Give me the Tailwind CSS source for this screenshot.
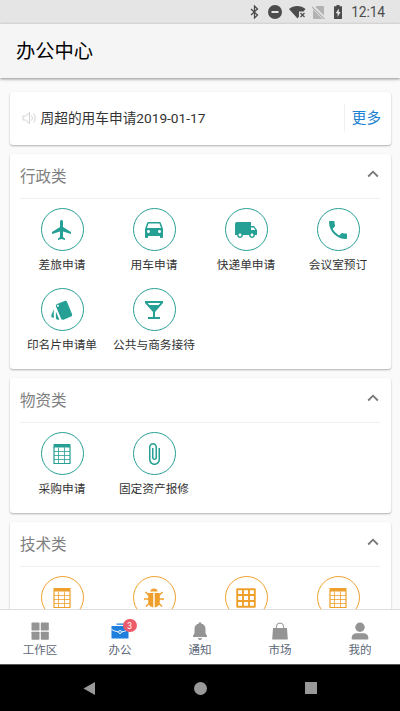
<!DOCTYPE html>
<html lang="zh-CN">
<head>
<meta charset="utf-8">
<meta name="viewport" content="width=device-width, initial-scale=1">
<title>办公中心</title>
<script src="https://cdn.jsdelivr.net/npm/@tailwindcss/browser@4"></script>
</head>
<body class="w-[400px] h-[711px] overflow-hidden bg-[#fafafa] flex flex-col font-['Roboto','Noto_Sans_CJK_SC',sans-serif] text-[#333]">

<svg class="hidden">
  <symbol id="plane" viewBox="0 0 24 24"><path d="M21 16v-2l-8-5V3.500C13 2.670 12.330 2 11.500 2S10 2.670 10 3.500V9l-8 5v2l8-2.500V19l-2 1.500V22l3.500-1 3.500 1v-1.500L13 19v-5.500l8 2.500z"/></symbol>
  <symbol id="car" viewBox="0 0 24 24"><path d="M18.920 5.010C18.720 4.420 18.160 4 17.500 4h-11c-.660 0-1.210.420-1.420 1.010L3 11v8c0 .550.450 1 1 1h1c.550 0 1-.450 1-1v-1h12v1c0 .550.450 1 1 1h1c.550 0 1-.450 1-1v-8l-2.080-5.990zM6.500 15c-.830 0-1.500-.670-1.500-1.500S5.670 12 6.500 12s1.500.670 1.500 1.500S7.330 15 6.500 15zm11 0c-.830 0-1.500-.670-1.500-1.500s.670-1.500 1.500-1.500 1.500.670 1.500 1.500-.670 1.500-1.500 1.500zM5 10l1.500-4.500h11L19 10H5z"/></symbol>
  <symbol id="truck" viewBox="0 0 24 24"><path d="M20 8h-3V4H3c-1.100 0-2 .900-2 2v11h2c0 1.660 1.340 3 3 3s3-1.340 3-3h6c0 1.660 1.340 3 3 3s3-1.340 3-3h2v-5l-3-4zM6 18.500c-.830 0-1.500-.670-1.500-1.500s.670-1.500 1.500-1.500 1.500.670 1.500 1.500-.670 1.500-1.500 1.500zm13.500-9l1.960 2.500H17V9.500h2.500zm-1.500 9c-.830 0-1.500-.670-1.500-1.500s.670-1.500 1.500-1.500 1.500.670 1.500 1.500-.670 1.500-1.500 1.500z"/></symbol>
  <symbol id="phone" viewBox="0 0 24 24"><path d="M6.620 10.790c1.440 2.830 3.760 5.140 6.590 6.590l2.200-2.200c.270-.270.670-.360 1.020-.240 1.120.370 2.330.570 3.570.570.550 0 1 .450 1 1V20c0 .550-.450 1-1 1-9.390 0-17-7.610-17-17 0-.550.450-1 1-1h3.500c.550 0 1 .450 1 1 0 1.250.200 2.450.570 3.570.110.350.030.740-.250 1.020l-2.200 2.200z"/></symbol>
  <symbol id="cards" viewBox="0 0 24 24"><path d="M2.500 19.600l1.300.600v-9L1.400 17c-.400 1 .100 2.200 1.100 2.600zM22 15.900L17.100 4c-.300-.800-1-1.200-1.800-1.200-.300 0-.500 0-.800.100L7.100 6c-.800.300-1.200 1-1.200 1.800 0 .300 0 .500.100.800l5 12c.300.800 1 1.200 1.800 1.200.300 0 .500 0 .800-.100l7.400-3.100c1-.400 1.500-1.600 1-2.700zM7.900 8.800c-.500 0-1-.500-1-1s.500-1 1-1 1 .500 1 1-.500 1-1 1zm-2 11c0 1.100.900 2 2 2h1.500l-3.500-8.400v6.400z"/></symbol>
  <symbol id="glass" viewBox="0 0 24 24"><path d="M21 5V3H3v2l8 9v5H6v2h12v-2h-5v-5l8-9zM7.430 7L5.660 5h12.690l-1.780 2H7.430z"/></symbol>
  <symbol id="table" viewBox="0 0 24 24"><path d="M3.500 2h17v3.500h-17z"/><path fill="none" stroke="currentColor" stroke-width="1.200" d="M4 5v16.500h16V5"/><path fill="none" stroke="currentColor" stroke-width=".8" d="M4 9.500h16M4 13.500h16M4 17.500h16M8.500 5.500v16M14.500 5.500v16"/></symbol>
  <symbol id="clip" viewBox="0 0 24 24"><path d="M16.500 6v11.500c0 2.210-1.790 4-4 4s-4-1.790-4-4V5c0-1.380 1.120-2.500 2.500-2.500s2.500 1.120 2.500 2.500v10.500c0 .550-.450 1-1 1s-1-.450-1-1V6H10v9.500c0 1.380 1.120 2.500 2.500 2.500s2.500-1.120 2.500-2.500V5c0-2.210-1.790-4-4-4S7 2.790 7 5v12.500c0 3.040 2.460 5.500 5.500 5.500s5.500-2.460 5.500-5.500V6h-1.500z"/></symbol>
  <symbol id="bug" viewBox="0 0 24 24"><path d="M8.200 5.400a3.900 3.900 0 0 1 7.600 0zM6.200 7h5.100v14.500C8.300 21 6.200 19 6.200 16zM12.700 7h5.100v9c0 3-2.100 5-5.100 5.500z"/><path fill="none" stroke="currentColor" stroke-width="1.400" d="M7 9.500L3.500 6M17 9.500L20.500 6M7 13H2M17 13h5M7.500 17L4 20.500M16.500 17l3.500 3.500"/></symbol>
  <symbol id="grid" viewBox="0 0 24 24"><path fill="none" stroke="currentColor" stroke-width="1.900" stroke-linejoin="round" d="M3.200 3.200h17.600v17.600H3.200zM9 3v18M15 3v18M3 9h18M3 15h18"/></symbol>
  <symbol id="up" viewBox="0 0 12 8"><path fill="none" stroke="#777" stroke-width="1.800" d="M1.200 6.500L6 1.700l4.800 4.800"/></symbol>
</svg>

<header class="shrink-0 relative z-10">
  <div class="h-6 bg-[#e5e5e5] flex items-center justify-end pr-[15px] text-[#4c4c4c]">
    <svg class="w-[9px] h-[14px] mr-[9px]" viewBox="0 0 9 14" fill="none" stroke="currentColor" stroke-width="1.300"><path d="M1 4l6.500 6L4.500 13V1l3 3L1 10"/></svg>
    <svg class="size-[14px] mr-[7px]" viewBox="0 0 14 14"><circle cx="7" cy="7" r="7" fill="currentColor"/><path fill="#e5e5e5" d="M3.500 6h7v2h-7z"/></svg>
    <svg class="w-[17px] h-[14px] mr-[6px]" viewBox="0 0 17 14"><path fill="currentColor" d="M0 4C4.500 0 12 0 16.500 4L14.500 6.500H10v5L8.500 13.500z"/><path fill="none" stroke="currentColor" stroke-width="1.200" d="M11.500 8l4 4M15.500 8l-4 4"/></svg>
    <svg class="w-[13px] h-[13px] mr-[9px]" viewBox="0 0 13 13"><path fill="#b2b2b2" d="M4.500 0H11q1 0 1 1v8.500L3.500 1zM1 3.500L10.500 13H2q-1 0-1-1z"/><path stroke="#b2b2b2" stroke-width="1.200" d="M0 1l12.500 12"/></svg>
    <svg class="w-[8px] h-[14px] mr-[9px]" viewBox="0 0 8 14"><path fill="currentColor" d="M2.500 0h3v1.300H8V14H0V1.300h2.500z"/><path fill="#e5e5e5" d="M4.800 3.500L1.700 8.300h1.900V12l3-5H4.800z"/></svg>
    <span class="text-[13.800px] leading-6 tracking-[-0.1px]">12:14</span>
  </div>
  <div class="h-[54px] bg-[#f5f5f5] flex items-center pl-[16px] pt-[2px] shadow-[0_1px_3px_rgba(0,0,0,0.45)]">
    <h1 class="text-[19.300px] leading-none text-black">办公中心</h1>
  </div>
</header>

<main class="flex-1 min-h-0 overflow-hidden px-[9.500px] pt-[13.500px] flex flex-col gap-[9px]">
  <section class="shrink-0 h-[53px] bg-white rounded-[3px] shadow-[0_1px_2px_rgba(0,0,0,0.3)] flex items-center pl-3 pr-[9.500px]">
    <svg class="w-[14px] h-[14px] mr-[5px]" viewBox="0 0 14 14" fill="none" stroke="#d2d2d2" stroke-width="1"><path d="M1 5h2.500l4-3.500v11L3.500 9H1zM9.500 4.500q2 2.500 0 5M11.500 2.500q3.500 4.500 0 9"/></svg>
    <span class="text-[13.700px] leading-5 text-[#333]">周超的用车申请2019-01-17</span>
    <span class="ml-auto h-7 border-l border-[#f0f0f0] pl-[7px] flex items-center pt-px text-[14.600px] text-[#1b81d2]">更多</span>
  </section>

  <section class="shrink-0 h-[215px] bg-white rounded-[3px] shadow-[0_1px_2px_rgba(0,0,0,0.3)] px-[6.500px]">
    <div class="h-[45px] mx-1 border-b border-[#f1f1f1] flex items-center justify-between pr-px">
      <h2 class="pt-[5px] text-[15.500px] leading-none text-[#808080]">行政类</h2><svg class="w-3 h-2 mb-1"><use href="#up"/></svg>
    </div>
    <div class="pt-[9.500px] grid grid-cols-4 auto-rows-[80px] text-[#26a095] whitespace-nowrap">
      <div class="flex flex-col items-center"><span class="size-[43px] rounded-full border border-current flex items-center justify-center"><svg class="size-6 fill-current"><use href="#plane"/></svg></span><span class="mt-[6px] text-[11.700px] leading-[17px] text-[#333]">差旅申请</span></div>
      <div class="flex flex-col items-center"><span class="size-[43px] rounded-full border border-current flex items-center justify-center"><svg class="size-6 fill-current"><use href="#car"/></svg></span><span class="mt-[6px] text-[11.700px] leading-[17px] text-[#333]">用车申请</span></div>
      <div class="flex flex-col items-center"><span class="size-[43px] rounded-full border border-current flex items-center justify-center"><svg class="size-6 fill-current"><use href="#truck"/></svg></span><span class="mt-[6px] text-[11.700px] leading-[17px] text-[#333]">快递单申请</span></div>
      <div class="flex flex-col items-center"><span class="size-[43px] rounded-full border border-current flex items-center justify-center"><svg class="size-6 fill-current"><use href="#phone"/></svg></span><span class="mt-[6px] text-[11.700px] leading-[17px] text-[#333]">会议室预订</span></div>
      <div class="flex flex-col items-center"><span class="size-[43px] rounded-full border border-current flex items-center justify-center"><svg class="size-6 fill-current"><use href="#cards"/></svg></span><span class="mt-[6px] text-[11.700px] leading-[17px] text-[#333]">印名片申请单</span></div>
      <div class="flex flex-col items-center"><span class="size-[43px] rounded-full border border-current flex items-center justify-center"><svg class="size-6 fill-current"><use href="#glass"/></svg></span><span class="mt-[6px] text-[11.700px] leading-[17px] text-[#333]">公共与商务接待</span></div>
    </div>
  </section>

  <section class="shrink-0 h-[135px] bg-white rounded-[3px] shadow-[0_1px_2px_rgba(0,0,0,0.3)] px-[6.500px]">
    <div class="h-[45px] mx-1 border-b border-[#f1f1f1] flex items-center justify-between pr-px">
      <h2 class="pt-[5px] text-[15.500px] leading-none text-[#808080]">物资类</h2><svg class="w-3 h-2 mb-1"><use href="#up"/></svg>
    </div>
    <div class="pt-[9.500px] grid grid-cols-4 auto-rows-[80px] text-[#26a095] whitespace-nowrap">
      <div class="flex flex-col items-center"><span class="size-[43px] rounded-full border border-current flex items-center justify-center"><svg class="size-6 fill-current"><use href="#table"/></svg></span><span class="mt-[6px] text-[11.700px] leading-[17px] text-[#333]">采购申请</span></div>
      <div class="flex flex-col items-center"><span class="size-[43px] rounded-full border border-current flex items-center justify-center"><svg class="size-6 fill-current"><use href="#clip"/></svg></span><span class="mt-[6px] text-[11.700px] leading-[17px] text-[#333]">固定资产报修</span></div>
    </div>
  </section>

  <section class="shrink-0 h-[135px] bg-white rounded-[3px] shadow-[0_1px_2px_rgba(0,0,0,0.3)] px-[6.500px]">
    <div class="h-[45px] mx-1 border-b border-[#f1f1f1] flex items-center justify-between pr-px">
      <h2 class="pt-[5px] text-[15.500px] leading-none text-[#808080]">技术类</h2><svg class="w-3 h-2 mb-1"><use href="#up"/></svg>
    </div>
    <div class="pt-[9.500px] grid grid-cols-4 auto-rows-[80px] text-[#efa02c]">
      <div class="flex flex-col items-center"><span class="size-[43px] rounded-full border border-current flex items-center justify-center"><svg class="size-6 fill-current"><use href="#table"/></svg></span></div>
      <div class="flex flex-col items-center"><span class="size-[43px] rounded-full border border-current flex items-center justify-center"><svg class="size-6 fill-current"><use href="#bug"/></svg></span></div>
      <div class="flex flex-col items-center"><span class="size-[43px] rounded-full border border-current flex items-center justify-center"><svg class="size-6 fill-current"><use href="#grid"/></svg></span></div>
      <div class="flex flex-col items-center"><span class="size-[43px] rounded-full border border-current flex items-center justify-center"><svg class="size-6 fill-current"><use href="#table"/></svg></span></div>
    </div>
  </section>
</main>

<nav class="shrink-0 relative h-[55px] bg-white border-t border-[#dedede] grid grid-cols-5 text-[11.500px] leading-[16px] text-[#5c6878]">
  <a class="flex flex-col items-center pt-[12px]"><svg class="size-[18px]" viewBox="0 0 18 18" fill="#949494"><rect x=".5" y=".5" width="8" height="8" rx=".6"/><rect x="9.800" y=".5" width="8" height="8" rx=".6"/><rect x=".5" y="9.700" width="8" height="8" rx=".6"/><rect x="9.800" y="9.700" width="8" height="8" rx=".6"/></svg><span class="mt-[2px]">工作区</span></a>
  <a class="flex flex-col items-center pt-[12px]"><span class="relative"><svg class="size-[18px]" viewBox="0 0 18 18"><path fill="#1e7fdc" d="M5.500 1.500h8v1.300h-8zM.5 4h17v12.500H.5z"/><path fill="none" stroke="#fff" stroke-width=".9" d="M.5 7.500Q4 9.500 7.500 10M17.500 7.500Q14 9.500 10.500 10"/><circle cx="9" cy="10" r="1.500" fill="#1e7fdc" stroke="#fff" stroke-width=".9"/></svg><span class="absolute left-[12px] top-[-3.500px] size-[13.500px] rounded-full bg-[#ec5c6a] text-white text-[8.500px] leading-[14px] text-center">3</span></span><span class="mt-[2px]">办公</span></a>
  <a class="flex flex-col items-center pt-[12px]"><svg class="size-[18px]" viewBox="0 0 18 18" fill="#949494"><path d="M7.800 1.500a1.200 1.200 0 0 1 2.400 0C13 2 14.500 4.200 14.500 7v4l1.500 3v1H2v-1l1.500-3V7c0-2.800 1.500-5 4.300-5.500zM7 16h4a2 2 0 0 1-4 0z"/></svg><span class="mt-[2px]">通知</span></a>
  <a class="flex flex-col items-center pt-[12px]"><svg class="size-[18px]" viewBox="0 0 18 18"><path fill="#949494" d="M2 6h14l.8 11.500H1.200z"/><path fill="none" stroke="#949494" stroke-width="1" d="M5.300 8V5a3.700 4 0 0 1 7.400 0v3"/></svg><span class="mt-[2px]">市场</span></a>
  <a class="flex flex-col items-center pt-[12px]"><svg class="size-[18px]" viewBox="0 0 18 18" fill="#949494"><circle cx="9" cy="5.200" r="4.700"/><path d="M.7 17.500V16c0-3.200 2.500-4.700 5-4.700h6.600c2.500 0 5 1.500 5 4.700v1.500z"/></svg><span class="mt-[2px]">我的</span></a>
</nav>

<footer class="shrink-0 h-[47px] bg-black border-t border-[#555] flex items-center justify-between px-[83px] text-[#999]">
  <svg class="w-[12px] h-[13px]" viewBox="0 0 12 13" fill="currentColor"><path d="M12 0v13L.5 6.500z"/></svg>
  <svg class="size-[13px]" viewBox="0 0 13 13" fill="currentColor"><circle cx="6.500" cy="6.500" r="6.500"/></svg>
  <span class="size-[12px] bg-current"></span>
</footer>
</body>
</html>
